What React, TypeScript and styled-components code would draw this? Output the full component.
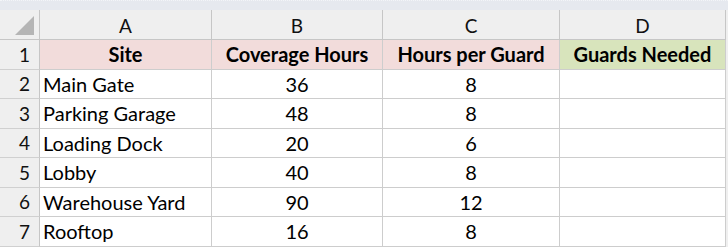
import styled, { createGlobalStyle } from "styled-components";

const GlobalStyle = createGlobalStyle`
  html, body {
    margin: 0;
    padding: 0;
    background: #ffffff;
  }
  body {
    font-family: Lato, "Open Sans", sans-serif;
  }
`;

const Page = styled.div`
  width: 728px;
  height: 248px;
  overflow: hidden;
  background: #ffffff;
  display: flex;
  flex-direction: column;
`;

const TopBand = styled.div`
  height: 10px;
  background: #e6e9ef;
  border-top: 1px dotted #f3f5f8;
  box-sizing: border-box;
`;

const Sheet = styled.div`
  display: grid;
  grid-template-columns: 40px 172px 171px 177px 166px 2px;
  grid-template-rows: 30px repeat(7, 29.5px);
`;

const Corner = styled.div`
  background: #efefef;
  border-right: 1px solid #c6c6c6;
  border-bottom: 1px solid #c6c6c6;
  position: relative;
  &::after {
    content: "";
    position: absolute;
    right: 5px;
    bottom: 4px;
    width: 0;
    height: 0;
    border-left: 19px solid transparent;
    border-bottom: 19px solid #b5b5b5;
  }
`;

const ColHead = styled.div`
  background: #efefef;
  border-right: 1px solid #c6c6c6;
  border-bottom: 1px solid #c6c6c6;
  display: flex;
  align-items: center;
  justify-content: center;
  font-size: 19px;
  color: #111;
  padding-top: 2px;
`;

const RowHead = styled.div`
  background: #efefef;
  border-right: 1px solid #c6c6c6;
  border-bottom: 1px solid #d0d0d0;
  display: flex;
  align-items: center;
  justify-content: flex-end;
  padding-right: 9px;
  font-size: 19px;
  color: #111;
`;

const Cell = styled.div<{ $bg?: string; $align?: string; $bold?: boolean }>`
  background: ${(p) => p.$bg || "#ffffff"};
  border-right: 1px solid #cdcdcd;
  border-bottom: 1px solid #cdcdcd;
  display: flex;
  align-items: center;
  justify-content: ${(p) => p.$align || "flex-start"};
  padding-left: ${(p) => (p.$align === "center" ? "0" : "3px")};
  font-size: 20px;
  font-weight: ${(p) => (p.$bold ? 700 : 400)};
  color: #000;
  white-space: nowrap;
  overflow: hidden;
`;

const Edge = styled.div`
  background: #efefef;
`;

const rows = [
  ["Main Gate", "36", "8"],
  ["Parking Garage", "48", "8"],
  ["Loading Dock", "20", "6"],
  ["Lobby", "40", "8"],
  ["Warehouse Yard", "90", "12"],
  ["Rooftop", "16", "8"],
];

export default function App() {
  return (
    <Page>
      <GlobalStyle />
      <TopBand />
      <Sheet>
        <Corner />
        <ColHead>A</ColHead>
        <ColHead>B</ColHead>
        <ColHead>C</ColHead>
        <ColHead>D</ColHead>
        <Edge />

        <RowHead>1</RowHead>
        <Cell $bg="#f2dcdb" $align="center" $bold>Site</Cell>
        <Cell $bg="#f2dcdb" $align="center" $bold>Coverage Hours</Cell>
        <Cell $bg="#f2dcdb" $align="center" $bold>Hours per Guard</Cell>
        <Cell $bg="#d8e4bc" $align="center" $bold>Guards Needed</Cell>
        <Edge />

        {rows.map((r, i) => (
          <>
            <RowHead key={"h" + i}>{i + 2}</RowHead>
            <Cell key={"a" + i}>{r[0]}</Cell>
            <Cell key={"b" + i} $align="center">{r[1]}</Cell>
            <Cell key={"c" + i} $align="center">{r[2]}</Cell>
            <Cell key={"d" + i} />
            <Edge key={"e" + i} />
          </>
        ))}
      </Sheet>
    </Page>
  );
}
